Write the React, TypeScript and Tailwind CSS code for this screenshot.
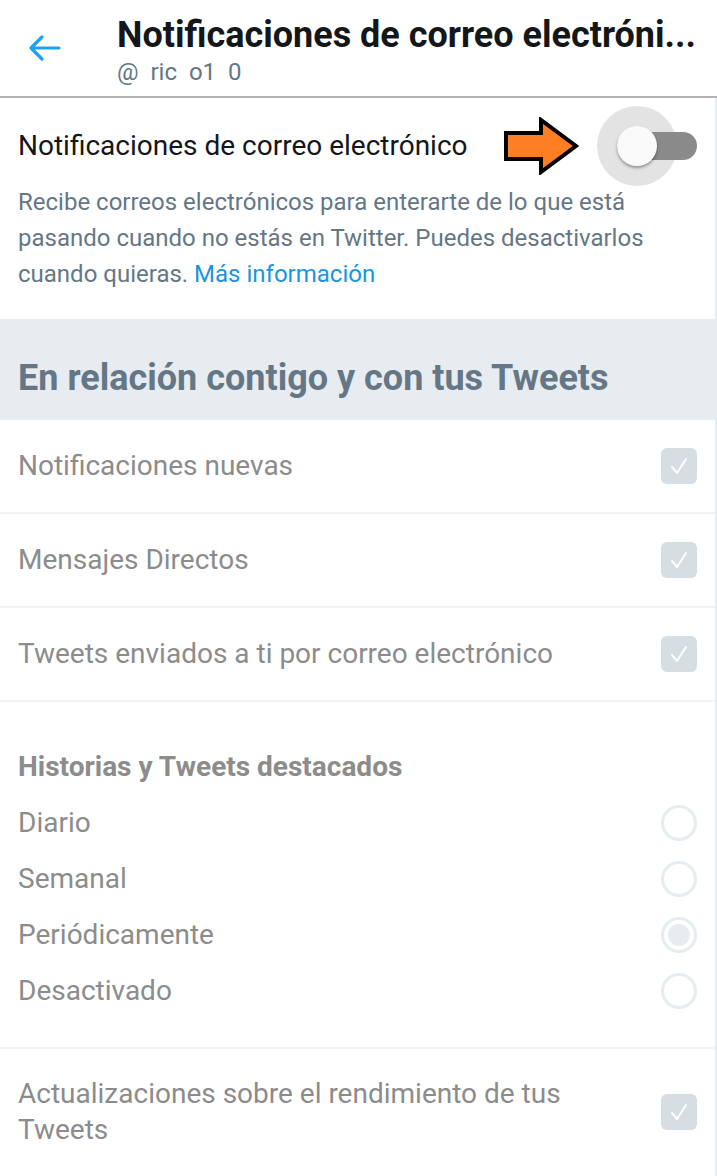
import React from "react";

function Check() {
  return (
    <div className="flex h-[36px] w-[36px] items-center justify-center rounded-[6px] bg-[#d6dde3]">
      <svg width="22" height="22" viewBox="0 0 22 22" fill="none">
        <path d="M4 12 L9 18 L18 4" stroke="#ffffff" strokeWidth="2" strokeLinecap="round" strokeLinejoin="round" />
      </svg>
    </div>
  );
}

function Radio({ selected }: { selected?: boolean }) {
  return (
    <div className="flex h-[36px] w-[36px] items-center justify-center rounded-full border-[3px] border-[#e6ecf0]">
      {selected && <div className="h-[22px] w-[22px] rounded-full bg-[#e6ecf0]" />}
    </div>
  );
}

function Row({ label }: { label: string }) {
  return (
    <div className="flex h-[94px] items-center justify-between border-b-2 border-[#f0f3f6] pl-[18px] pr-[18px]">
      <span className="text-[28px] text-[#8c8c8c]">{label}</span>
      <Check />
    </div>
  );
}

export default function App() {
  return (
    <div className="w-[717px] bg-white" style={{ fontFamily: "Roboto, 'Noto Sans', sans-serif" }}>
      <header className="flex h-[98px] items-center border-b-2 border-[#b3b3b3]">
        <div className="flex w-[117px] items-center justify-start pl-[28px]">
          <svg width="34" height="28" viewBox="0 0 34 28" fill="none">
            <path d="M31 14 H4 M14 3 L3 14 L14 25" stroke="#1da1f2" strokeWidth="3.2" strokeLinecap="round" strokeLinejoin="round" />
          </svg>
        </div>
        <div className="flex min-w-0 flex-1 flex-col pt-[3px]">
          <div className="whitespace-nowrap text-[36px] font-bold leading-[44px] text-[#14171a]">
            Notificaciones de correo electróni...
          </div>
          <div className="text-[24px] leading-[30px] text-[#657786] whitespace-pre">@  ric  o1  0</div>
        </div>
      </header>
      <div className="border-r-2 border-[#e6ecf0]">
        <section className="px-[18px] pb-[27px] pt-[10px]">
          <div className="flex h-[76px] items-center justify-between">
            <span className="text-[28px] text-[#14171a]">Notificaciones de correo electrónico</span>
            <div className="flex items-center">
              <svg width="76" height="58" viewBox="0 0 76 58" className="mr-[18px]">
                <path d="M3 16 H38 V3 L73 29 L38 55 V42 H3 Z" fill="#fd7e23" stroke="#000" strokeWidth="4" strokeLinejoin="miter" />
              </svg>
              <div className="relative h-[80px] w-[100px]">
                <div className="absolute left-[0px] top-0 h-[80px] w-[80px] rounded-full bg-[#e3e3e3]" />
                <div className="absolute left-[20px] top-[26px] h-[28px] w-[80px] rounded-full bg-[#8a8a8a]" />
                <div className="absolute left-[20px] top-[20px] h-[40px] w-[40px] rounded-full bg-[#fafafa] shadow-[0_2px_3px_rgba(0,0,0,0.35)]" />
              </div>
            </div>
          </div>
          <p className="text-[24px] leading-[36px] text-[#657786]">
            Recibe correos electrónicos para enterarte de lo que está pasando cuando no estás en Twitter. Puedes desactivarlos cuando quieras.{" "}
            <span className="text-[#1b95e0]">Más información</span>
          </p>
        </section>
        <div className="flex h-[101px] items-center bg-[#e6ecf0] px-[18px]">
          <h2 className="pt-[16px] text-[36px] font-bold text-[#657786]">En relación contigo y con tus Tweets</h2>
        </div>
        <Row label="Notificaciones nuevas" />
        <Row label="Mensajes Directos" />
        <Row label="Tweets enviados a ti por correo electrónico" />
        <div className="border-b-2 border-[#f0f3f6] px-[18px] pb-[28px] pt-[37px]">
          <div className="flex h-[56px] items-center text-[28px] font-bold text-[#8c8c8c]">Historias y Tweets destacados</div>
          <div className="flex flex-col">
            {[
              ["Diario", false],
              ["Semanal", false],
              ["Periódicamente", true],
              ["Desactivado", false],
            ].map(([l, s]) => (
              <div key={l as string} className="flex h-[56px] items-center justify-between">
                <span className="text-[28px] text-[#8c8c8c]">{l as string}</span>
                <Radio selected={s as boolean} />
              </div>
            ))}
          </div>
        </div>
        <div className="flex items-center justify-between px-[18px] pb-[28px] pt-[27px]">
          <span className="w-[580px] text-[28px] leading-[36px] text-[#8c8c8c]">
            Actualizaciones sobre el rendimiento de tus Tweets
          </span>
          <Check />
        </div>
      </div>
    </div>
  );
}
